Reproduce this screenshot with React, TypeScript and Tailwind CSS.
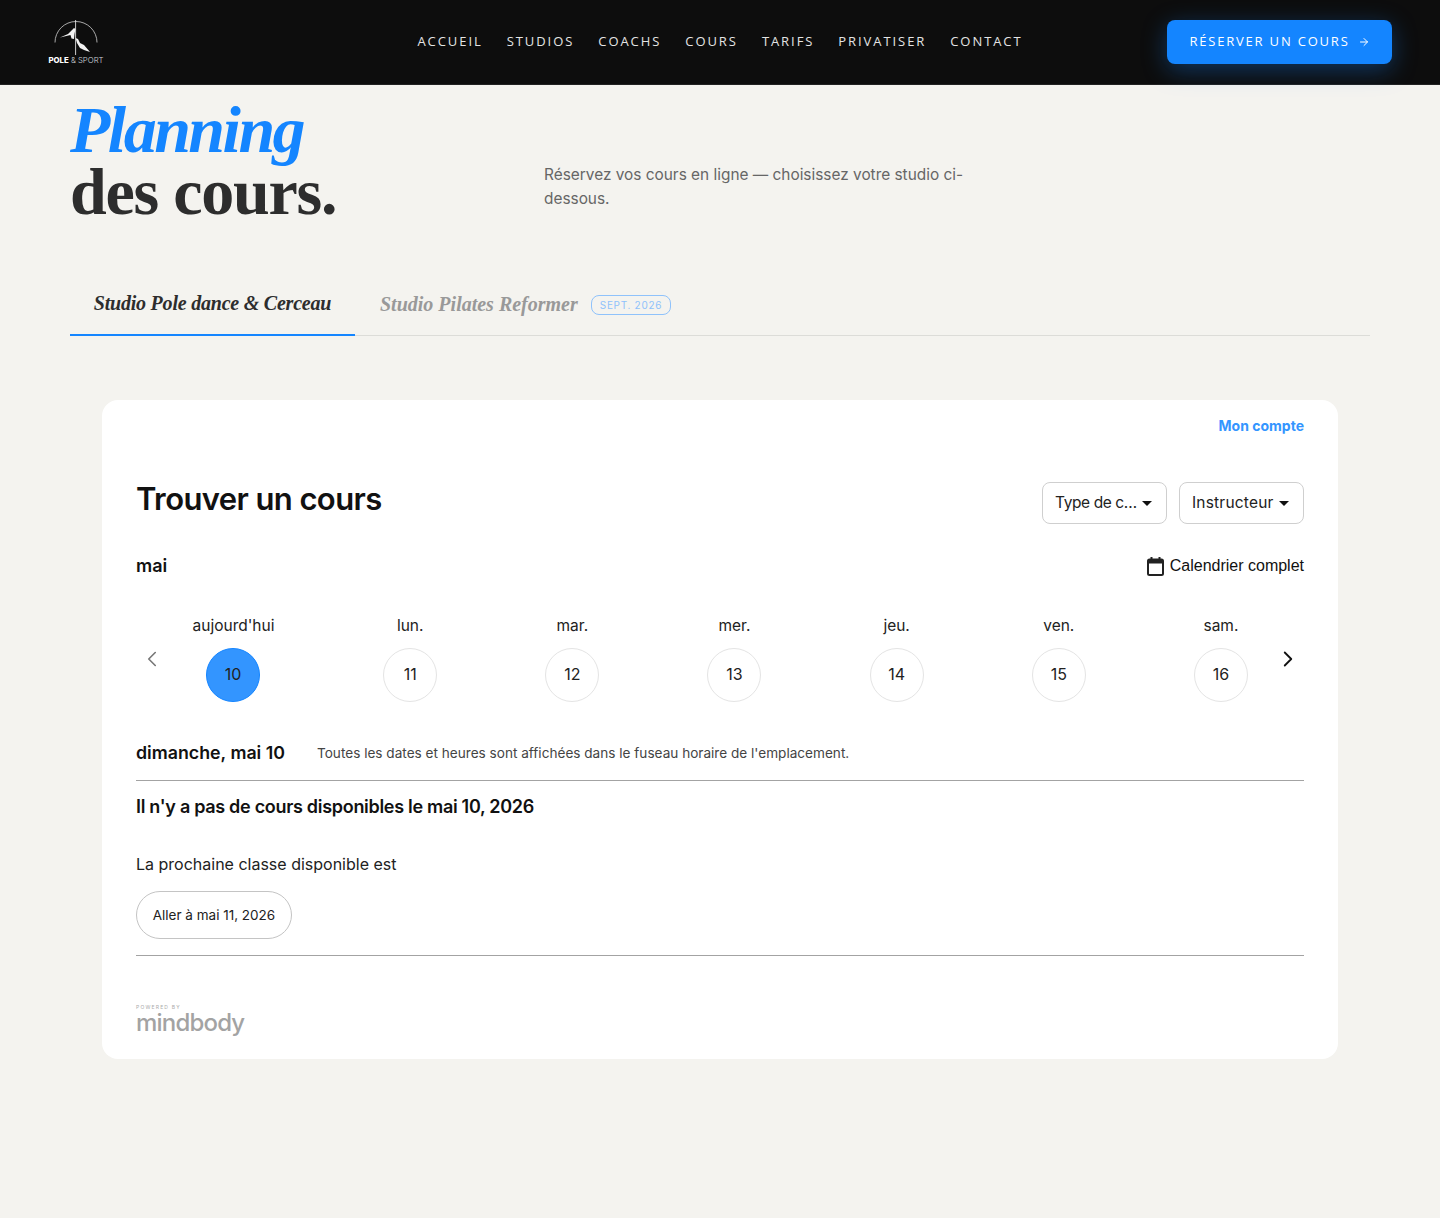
import React from 'react';
import { ArrowRight, ChevronLeft, ChevronRight } from 'lucide-react';

const navLinks = ['ACCUEIL', 'STUDIOS', 'COACHS', 'COURS', 'TARIFS', 'PRIVATISER', 'CONTACT'];

const days = [
  { label: "aujourd'hui", num: 10, active: true },
  { label: 'lun.', num: 11 },
  { label: 'mar.', num: 12 },
  { label: 'mer.', num: 13 },
  { label: 'jeu.', num: 14 },
  { label: 'ven.', num: 15 },
  { label: 'sam.', num: 16 },
];

const sans = "font-['Inter',sans-serif]";
const nav = "font-['Open_Sans',sans-serif]";
const serif = "font-['Liberation_Serif',serif]";

const Logo = () => (
  <div className="flex w-[56px] flex-col items-center">
    <svg width="44" height="36" viewBox="0 0 44 36" fill="none">
      <path d="M1 23.5 A21 21 0 0 1 43 23.5" stroke="#cfcfcf" strokeWidth="0.8" />
      <path d="M21.6 1 V36" stroke="#e0e0e0" strokeWidth="0.9" />
      <path d="M6 18.5 L14 15 L20 9 L21.5 10 L20.5 15 L20 20 L17.5 19.5 L16.5 16 Z" fill="#f2f2f2" />
      <path d="M21.5 19 L24 20 L26 24 L30 26 L36 33 L30 31 L26 29 L23 24 Z" fill="#f2f2f2" />
    </svg>
    <div className={`${sans} whitespace-nowrap text-[7.8px] leading-[10px] text-white`}>
      <span className="font-extrabold">POLE</span>
      <span className="font-light text-gray-300"> &amp; SPORT</span>
    </div>
  </div>
);

const Dropdown = ({ label, tracking }: { label: string; tracking: string }) => (
  <button className="flex h-[42px] w-[125px] items-center gap-[5px] rounded-lg border border-[#cfcfcf] bg-white pl-[12px] text-[15.5px] text-[#222]">
    <span className={tracking}>{label}</span>
    <span className="h-0 w-0 border-x-[5.5px] border-t-[5px] border-x-transparent border-t-[#111]" />
  </button>
);

export default function App() {
  return (
    <div className={`${sans} h-[1218px] overflow-hidden bg-[#f4f3ef]`}>
      {/* Header */}
      <header className="flex h-[85px] items-center border-b border-[#222] bg-[#0d0d0d] px-[48px]">
        <div className="flex-1">
          <Logo />
        </div>
        <nav className={`${nav} flex gap-6 text-[13px] tracking-[1.93px] text-[#e4e4e4]`}>
          {navLinks.map(link => (
            <a key={link}>{link}</a>
          ))}
        </nav>
        <div className="flex flex-1 justify-end">
          <button className={`${nav} flex h-[44px] w-[225px] items-center justify-center gap-2 rounded-lg bg-[#1485ff] text-[13px] tracking-[1.8px] text-white shadow-[0_6px_24px_rgba(20,133,255,0.35)]`}>
            RÉSERVER UN COURS
            <ArrowRight size={12} />
          </button>
        </div>
      </header>

      <main className="px-[70px]">
        {/* Hero */}
        <div className="flex h-[190px] items-start pt-[14px]">
          <h1 className={`${serif} w-[474px] text-[66px] font-bold leading-[62px] tracking-[-1.25px] text-[#2d2d2d]`}>
            <em className="block tracking-[-2.5px] text-[#1485ff]">Planning</em>
            des cours.
          </h1>
          <p className="mt-[64px] w-[440px] text-[15.4px] leading-[24px] text-[#666]">
            Réservez vos cours en ligne — choisissez votre studio ci-dessous.
          </p>
        </div>

        {/* Tabs */}
        <div className="flex h-[61px] items-stretch border-b border-[#dcdcd8]">
          <div className={`${serif} -mb-px flex w-[285px] items-center justify-center border-b-2 border-[#1485ff] pb-[3px] text-[20px] font-bold italic tracking-[-0.22px] text-[#2d2d2d]`}>
            Studio Pole dance &amp; Cerceau
          </div>
          <div className="ml-[25px] flex items-center gap-[13px]">
            <span className={`${serif} pb-[3px] text-[20px] font-bold italic text-[#999]`}>Studio Pilates Reformer</span>
            <span className="rounded-lg border border-[#8fc2fb] px-2 text-[10px] leading-[18px] tracking-[0.7px] text-[#8fc2fb]">SEPT. 2026</span>
          </div>
        </div>

        {/* Booking widget */}
        <section className="mx-[32px] mt-[64px] h-[659px] rounded-2xl bg-white px-[34px] pt-[17px]">
          <div className="text-right text-[14px] font-bold leading-[18px] text-[#3395ff]">Mon compte</div>

          <div className="mt-[47px] flex h-[42px] items-center justify-between">
            <h2 className="pb-[8px] text-[31px] font-semibold tracking-[-0.6px] text-[#111]">Trouver un cours</h2>
            <div className="flex gap-3">
              <Dropdown label="Type de c…" tracking="tracking-[-0.4px]" />
              <Dropdown label="Instructeur" tracking="tracking-[0.2px]" />
            </div>
          </div>

          <div className="mt-[30px] flex h-[24px] items-center justify-between">
            <span className="pb-[2px] text-[18px] font-semibold text-[#111]">mai</span>
            <span className="flex items-center gap-[6px] font-['Liberation_Sans',sans-serif] text-[16px] text-[#111]">
              <svg width="17" height="19" viewBox="0 0 17 19" fill="none">
                <path d="M4.5 0 V3 M12.5 0 V3" stroke="#222" strokeWidth="2" />
                <rect x="1" y="2.5" width="15" height="15.5" rx="1.5" stroke="#222" strokeWidth="2" />
                <rect x="1" y="2.5" width="15" height="4" fill="#222" />
              </svg>
              Calendrier complet
            </span>
          </div>

          {/* Day strip */}
          <div className="mt-[38px] flex h-[98px] items-start">
            <div className="flex h-[56px] w-[32px] shrink-0 items-end justify-center text-[#777]">
              <ChevronLeft size={26} strokeWidth={1.5} />
            </div>
            <div className="flex flex-1 justify-between px-6">
              {days.map(day => (
                <div key={day.num} className={`flex flex-col items-center ${day.active ? 'w-[83px]' : 'w-[54px]'}`}>
                  <span className="text-[15.5px] leading-[20px] text-[#222]">{day.label}</span>
                  <span className={`mt-[12px] flex h-[54px] w-[54px] items-center justify-center rounded-full border pb-[2px] text-[16px] text-[#222] ${day.active ? 'mr-px border-[#1485ff] bg-[#3395ff]' : 'border-[#e4e4e4] bg-white'}`}>
                    {day.num}
                  </span>
                </div>
              ))}
            </div>
            <div className="flex h-[56px] w-[32px] shrink-0 items-end justify-center text-[#111]">
              <ChevronRight size={26} strokeWidth={1.7} />
            </div>
          </div>

          <div className="mt-[26px] flex h-[31px] items-start gap-8">
            <span className="text-[17.8px] font-semibold leading-[26px] text-[#111]">dimanche, mai 10</span>
            <span className="pt-[3px] text-[13.6px] leading-[20px] text-[#444]">
              Toutes les dates et heures sont affichées dans le fuseau horaire de l'emplacement.
            </span>
          </div>

          <div className="mt-[9px] border-t border-[#a3a3a3] pt-[14px]">
            <div className="text-[18px] font-semibold leading-[24px] tracking-[-0.3px] text-[#111]">Il n'y a pas de cours disponibles le mai 10, 2026</div>
            <div className="mt-[35px] text-[16px] leading-[20px] text-[#222]">La prochaine classe disponible est</div>
            <button className="mt-[17px] h-[48px] w-[156px] rounded-3xl border border-[#c4c4c4] bg-white text-[13.5px] text-[#222]">
              Aller à mai 11, 2026
            </button>
          </div>

          <div className="mt-[16px] border-t border-[#a3a3a3] pt-[48px]">
            <div className="text-[5px] leading-[6px] tracking-[1.2px] text-[#aaa]">POWERED BY</div>
            <div className="text-[24px] font-medium leading-[26px] tracking-[-0.8px] text-[#a3a3a3]">mindbody</div>
          </div>
        </section>
      </main>
    </div>
  );
}
